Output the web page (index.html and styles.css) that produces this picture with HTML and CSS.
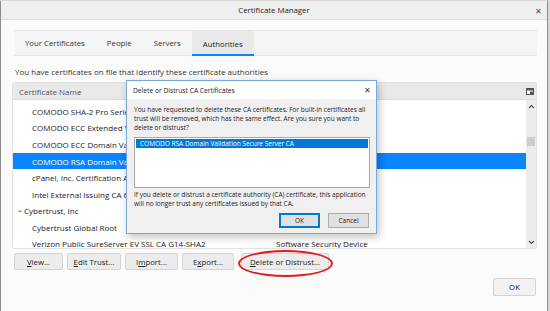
FILE: index.html
```html
<!DOCTYPE html>
<html>
<head>
<meta charset="utf-8">
<link rel="stylesheet" href="styles.css">
</head>
<body>
<div class="window">
  <div class="titlebar">
    <span class="title">Certificate Manager</span>
    <span class="close">✕</span>
  </div>
  <div class="content">
    <div class="tabs">
      <div class="tab">Your Certificates</div>
      <div class="tab">People</div>
      <div class="tab">Servers</div>
      <div class="tab active">Authorities</div>
    </div>
    <p class="desc">You have certificates on file that identify these certificate authorities</p>
    <div class="tree">
      <div class="tree-head">
        <span class="col-name">Certificate Name</span>
        <span class="col-dev">Security Device</span>
        <svg class="picker" width="8" height="7" viewBox="0 0 8 7"><rect x="0.5" y="0.5" width="7" height="6" fill="#fff" stroke="#555"/><rect x="0.5" y="0.5" width="7" height="2" fill="#555"/><rect x="4" y="3.5" width="3" height="3" fill="#555"/></svg>
      </div>
      <div class="tree-body">
        <div class="rows">
          <div class="row first"></div>
          <div class="row"><span class="c1 ind">COMODO SHA-2 Pro Series Secure Server CA</span></div>
          <div class="row"><span class="c1 ind">COMODO ECC Extended Validation Secure Server CA</span></div>
          <div class="row"><span class="c1 ind">COMODO ECC Domain Validation Secure Server CA</span></div>
          <div class="row sel"><span class="c1 ind">COMODO RSA Domain Validation Secure Server CA</span></div>
          <div class="row"><span class="c1 ind">cPanel, Inc. Certification Authority</span></div>
          <div class="row"><span class="c1 ind">Intel External Issuing CA 6B</span></div>
          <div class="row"><span class="c1 grp"><span class="chev">⌄</span>Cybertrust, Inc</span></div>
          <div class="row"><span class="c1 ind">Cybertrust Global Root</span></div>
          <div class="row last"><span class="c1 ind">Verizon Public SureServer EV SSL CA G14-SHA2</span><span class="c2">Software Security Device</span></div>
        </div>
        <div class="scroll">
          <svg class="arr" width="7" height="5" viewBox="0 0 7 5"><path d="M1 4 L3.5 1.5 L6 4" fill="none" stroke="#555" stroke-width="1.2"/></svg>
          <div class="track"><div class="thumb"></div></div>
          <svg class="arr" width="7" height="5" viewBox="0 0 7 5"><path d="M1 1 L3.5 3.5 L6 1" fill="none" stroke="#555" stroke-width="1.2"/></svg>
        </div>
      </div>
    </div>
    <div class="buttons">
      <button class="btn b-view"><u>V</u>iew...</button>
      <button class="btn b-edit"><u>E</u>dit Trust...</button>
      <button class="btn b-imp">I<u>m</u>port...</button>
      <button class="btn b-exp">E<u>x</u>port...</button>
      <button class="btn b-del"><u>D</u>elete or Distrust...</button>
    </div>
    <div class="footer">
      <button class="btn ok">OK</button>
    </div>
  </div>
  <div class="grip"></div>

  <div class="dialog">
    <div class="d-title">
      <span>Delete or Distrust CA Certificates</span>
      <span class="d-close">✕</span>
    </div>
    <div class="d-body">
      <p class="d-text">You have requested to delete these CA certificates. For built-in certificates all trust will be removed, which has the same effect. Are you sure you want to delete or distrust?</p>
      <div class="d-list">
        <div class="d-item">COMODO RSA Domain Validation Secure Server CA</div>
      </div>
      <p class="d-text d-note">If you delete or distrust a certificate authority (CA) certificate, this application will no longer trust any certificates issued by that CA.</p>
      <div class="d-buttons">
        <button class="dbtn primary">OK</button>
        <button class="dbtn">Cancel</button>
      </div>
    </div>
  </div>
  <div class="ring"></div>
</div>
</body>
</html>
```

FILE: styles.css
```css
* { box-sizing: border-box; }
html, body { margin: 0; padding: 0; }
body {
  width: 550px; height: 311px; overflow: hidden;
  background: #d8d8d8;
  font-family: "Open Sans", "Noto Sans", sans-serif;
  color: #222;
}
.window {
  position: relative;
  width: 548px; height: 311px;
  margin-top: 1px;
  background: #fbfbfb;
  border-left: 1px solid #8c8c8c;
  border-right: 1px solid #8c8c8c;
  border-bottom: 1px solid #8c8c8c;
  display: flex; flex-direction: column;
}
.titlebar {
  height: 19px; flex: none;
  background: #efefef;
  border-bottom: 1px solid #dadada;
  display: flex; align-items: center; justify-content: center;
  position: relative;
  font-size: 7.8px; color: #222;
}
.close {
  position: absolute; right: 5px; top: 4px;
  font-size: 8px; color: #444;
}
.content {
  flex: 1;
  padding: 10px 10px 0 11px;
  display: flex; flex-direction: column;
}
.tabs {
  margin-left: 2px;
  height: 26px;
  background: #f5f5f5;
  border-top: 1px solid #e6e6e6;
  border-bottom: 1px solid #e6e6e6;
  display: flex;
  font-size: 7.8px; color: #333;
}
.tab {
  padding: 0 11px;
  display: flex; align-items: center;
}
.tab.active {
  background: #e9e9e9;
  color: #222;
  border-bottom: 2px solid #0a84ff;
  padding-top: 2px;
  margin-bottom: -1px;
}
.desc {
  margin: 11px 0 5px 3px;
  font-size: 8px; color: #333;
  line-height: 10px;
}
.tree {
  height: 167px;
  background: #fff;
  border: 1px solid #e2e2e2;
  border-radius: 2px;
  display: flex; flex-direction: column;
  font-size: 8px;
}
.tree-head {
  height: 17px; flex: none;
  background: #e9e9e9;
  border-bottom: 1px solid #dcdcdc;
  display: flex; align-items: center;
  color: #555;
  position: relative;
}
.col-name { padding-left: 6px; width: 263px; }
.col-dev { padding-left: 6px; flex: 1; }
.picker { margin-right: 2px; }
.tree-body { flex: 1; display: flex; min-height: 0; }
.rows { flex: 1; overflow: hidden; }
.row {
  height: 16.6px;
  display: flex; align-items: center;
  color: #1a1a1a;
  white-space: nowrap;
  line-height: 11px;
}
.row.first { height: 3px; }
.row.last { height: 13px; align-items: flex-end; }
.row .c1 { width: 263px; overflow: hidden; }
.row .ind { padding-left: 19px; }
.row .grp { padding-left: 4px; }
.chev { display: inline-block; width: 7px; font-size: 7px; position: relative; top: -2px; }
.row.sel { background: #0a84ff; color: #fff; }
.scroll {
  width: 10px; flex: none;
  background: #ececec;
  display: flex; flex-direction: column; align-items: center;
  padding: 4px 0 3px;
}
.track { flex: 1; width: 100%; position: relative; }
.thumb { position: absolute; top: 28px; left: 1px; width: 8px; height: 9px; background: #cdcdcd; }
.buttons {
  display: flex; gap: 4px;
  margin-top: 4px; margin-left: 2px;
}
.btn {
  height: 17px;
  background: #ececec;
  border: 1px solid #d4d4d4;
  border-radius: 2px;
  font-family: inherit;
  font-size: 7.8px; color: #222;
  padding: 0;
}
.b-view { width: 49px; }
.b-edit { width: 54px; }
.b-imp { width: 53px; }
.b-exp { width: 52px; }
.b-del { width: 88px; margin-left: 3px; }
.footer { display: flex; justify-content: flex-end; margin-top: 8px; }
.ok { width: 43px; height: 18px; background: #f2f2f2; margin-right: 1px; }
.grip {
  position: absolute; right: 1px; bottom: 1px; width: 5px; height: 5px;
  background: radial-gradient(circle, #aaa 0.6px, transparent 0.7px) 0 0/2px 2px;
}
.dialog {
  position: absolute; left: 125px; top: 79px;
  width: 251px; height: 154px;
  border: 1px solid #76abdc;
  background: #f0f0f0;
  box-shadow: 2px 3px 8px rgba(0,0,0,0.25);
  display: flex; flex-direction: column;
  font-size: 6.5px; color: #222;
}
.d-title {
  height: 18px; flex: none;
  background: #fff;
  display: flex; align-items: center; justify-content: space-between;
  padding: 0 5px 0 6px;
  font-size: 6.7px;
}
.d-close { font-size: 7.5px; color: #333; }
.d-body { padding: 6px 6px 0 7px; flex: 1; display: flex; flex-direction: column; }
.d-text { margin: 0; line-height: 9px; }
.d-list {
  margin-top: 5px;
  height: 51px;
  background: #fff;
  border: 1px solid #a8a8a8;
  padding: 1px;
}
.d-item {
  height: 9px; line-height: 9px;
  background: #0078d7; color: #fff;
  padding-left: 4px;
}
.d-note { margin-top: 2px; }
.d-buttons {
  display: flex; justify-content: flex-end; gap: 8px;
  margin-top: 5px; padding-right: 1px;
}
.dbtn {
  width: 41px; height: 15px;
  background: #e1e1e1;
  border: 1px solid #adadad;
  font-family: inherit; font-size: 6.5px; color: #222;
  padding: 0;
}
.dbtn.primary { border: 1px solid #0078d7; box-shadow: inset 0 0 0 1px #0078d7; }
.ring {
  position: absolute; left: 237px; top: 249px;
  width: 95px; height: 27px;
  border: 2px solid #e41b1b;
  border-radius: 50%;
}
```
